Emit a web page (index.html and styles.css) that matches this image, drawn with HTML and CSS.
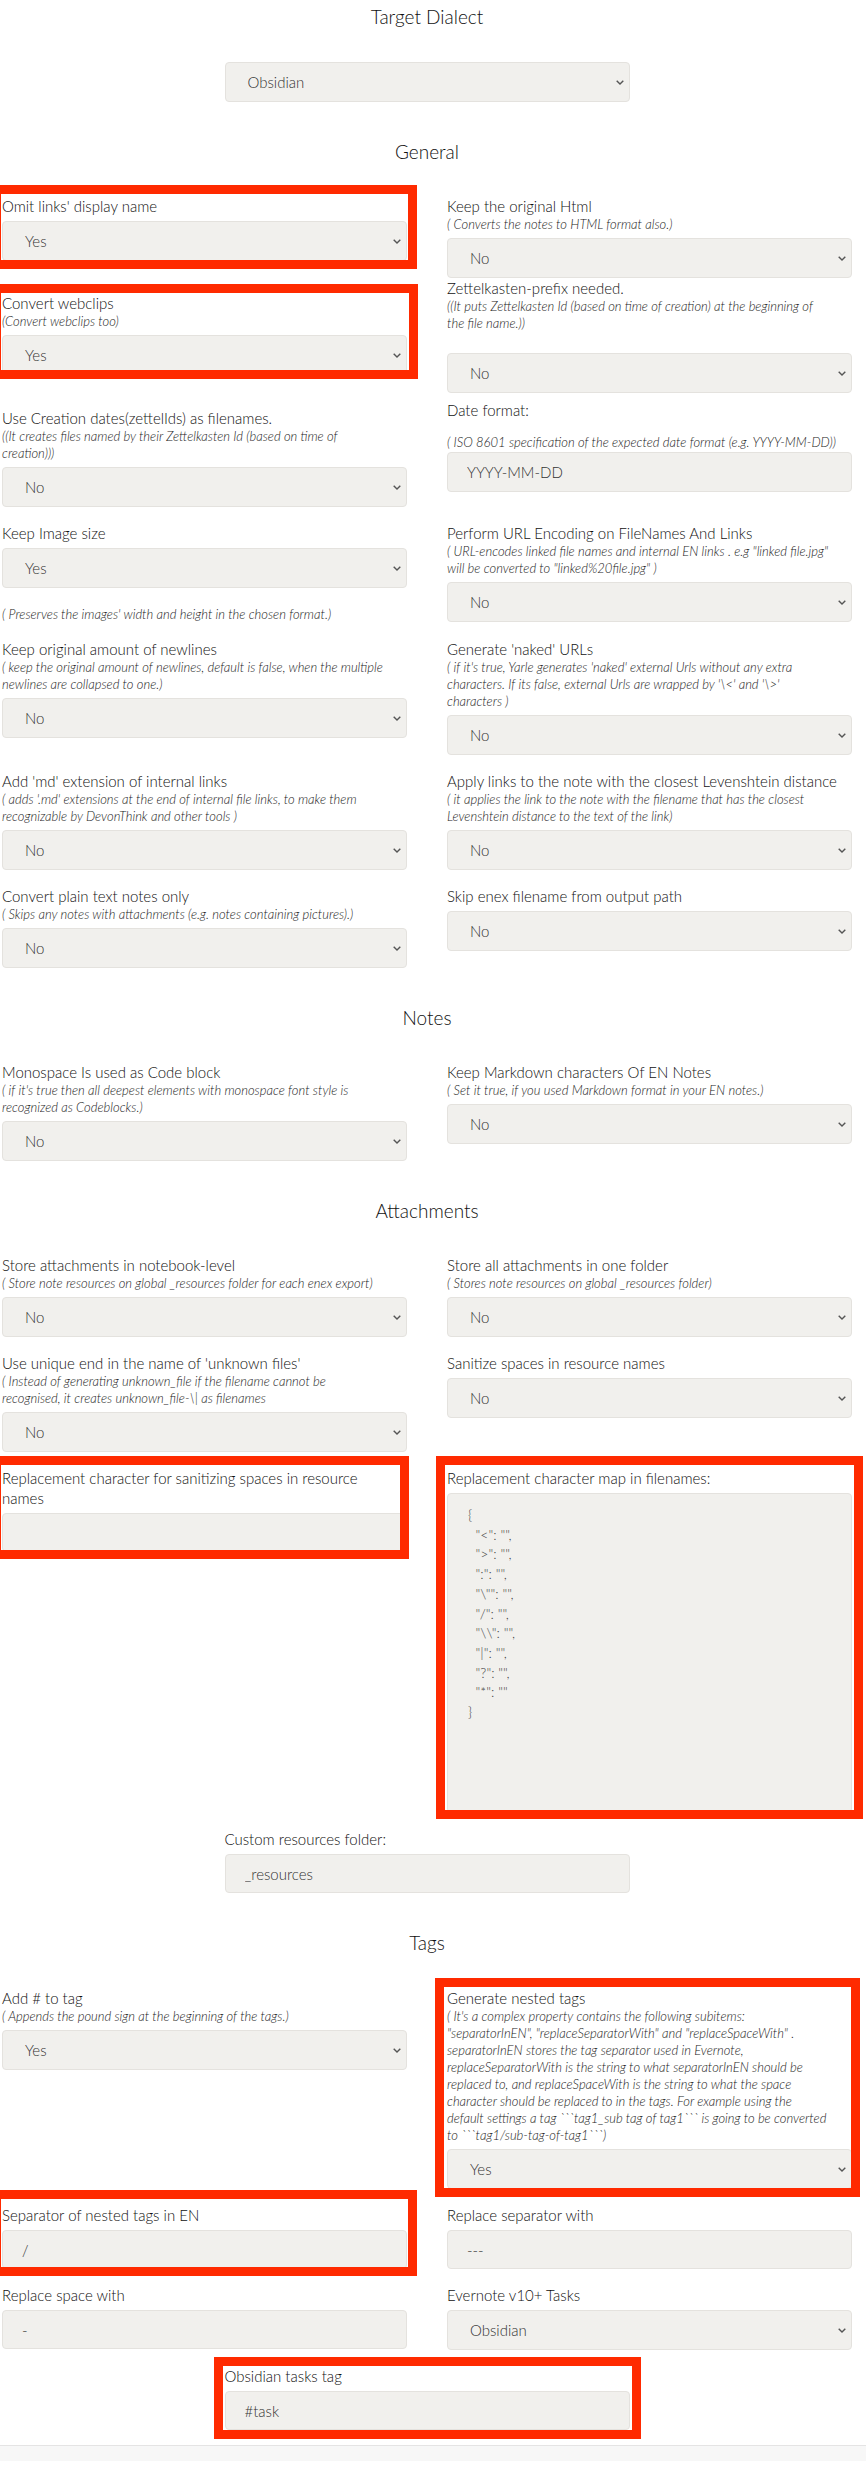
FILE: index.html
```html
<!DOCTYPE html>
<html lang="en">
<head>
<meta charset="utf-8">
<title>Yarle settings</title>
<link rel="stylesheet" href="styles.css">
</head>
<body>
<div class="page">
  <h2 class="heading first">Target Dialect</h2>
  <div class="center-field dialect">
    <div class="select"><span>Obsidian</span><svg class="chev" viewBox="0 0 8 5" width="8" height="5"><path d="M0.7 0.7 L4 4 L7.3 0.7" fill="none" stroke="#555" stroke-width="1.4"/></svg></div>
  </div>

  <h2 class="heading">General</h2>
  <div class="grid">
    <div class="group mark mark-a">
      <label class="lbl">Omit links' display name</label>
      <div class="select"><span>Yes</span><svg class="chev" viewBox="0 0 8 5" width="8" height="5"><path d="M0.7 0.7 L4 4 L7.3 0.7" fill="none" stroke="#555" stroke-width="1.4"/></svg></div>
    </div>
    <div class="group">
      <label class="lbl">Keep the original Html</label>
      <div class="desc">( Converts the notes to HTML format also.)</div>
      <div class="select"><span>No</span><svg class="chev" viewBox="0 0 8 5" width="8" height="5"><path d="M0.7 0.7 L4 4 L7.3 0.7" fill="none" stroke="#555" stroke-width="1.4"/></svg></div>
    </div>

    <div class="group mt15 mark mark-b">
      <label class="lbl">Convert webclips</label>
      <div class="desc">(Convert webclips too)</div>
      <div class="select"><span>Yes</span><svg class="chev" viewBox="0 0 8 5" width="8" height="5"><path d="M0.7 0.7 L4 4 L7.3 0.7" fill="none" stroke="#555" stroke-width="1.4"/></svg></div>
    </div>
    <div class="group mt0">
      <label class="lbl">Zettelkasten-prefix needed.</label>
      <div class="desc extra">((It puts Zettelkasten Id (based on time of creation) at the beginning of<br>the file name.))</div>
      <div class="select"><span>No</span><svg class="chev" viewBox="0 0 8 5" width="8" height="5"><path d="M0.7 0.7 L4 4 L7.3 0.7" fill="none" stroke="#555" stroke-width="1.4"/></svg></div>
    </div>

    <div class="group mt15">
      <label class="lbl">Use Creation dates(zettelIds) as filenames.</label>
      <div class="desc">((It creates files named by their Zettelkasten Id (based on time of<br>creation)))</div>
      <div class="select"><span>No</span><svg class="chev" viewBox="0 0 8 5" width="8" height="5"><path d="M0.7 0.7 L4 4 L7.3 0.7" fill="none" stroke="#555" stroke-width="1.4"/></svg></div>
    </div>
    <div class="group mt7">
      <label class="lbl">Date format:</label>
      <div class="desc gap-top">( ISO 8601 specification of the expected date format (e.g. YYYY-MM-DD))</div>
      <input class="input tight" type="text" value="YYYY-MM-DD">
    </div>

    <div class="group">
      <label class="lbl">Keep Image size</label>
      <div class="select"><span>Yes</span><svg class="chev" viewBox="0 0 8 5" width="8" height="5"><path d="M0.7 0.7 L4 4 L7.3 0.7" fill="none" stroke="#555" stroke-width="1.4"/></svg></div>
      <div class="desc after">( Preserves the images' width and height in the chosen format.)</div>
    </div>
    <div class="group">
      <label class="lbl">Perform URL Encoding on FileNames And Links</label>
      <div class="desc">( URL-encodes linked file names and internal EN links . e.g "linked file.jpg"<br>will be converted to "linked%20file.jpg" )</div>
      <div class="select"><span>No</span><svg class="chev" viewBox="0 0 8 5" width="8" height="5"><path d="M0.7 0.7 L4 4 L7.3 0.7" fill="none" stroke="#555" stroke-width="1.4"/></svg></div>
    </div>

    <div class="group">
      <label class="lbl">Keep original amount of newlines</label>
      <div class="desc">( keep the original amount of newlines, default is false, when the multiple<br>newlines are collapsed to one.)</div>
      <div class="select"><span>No</span><svg class="chev" viewBox="0 0 8 5" width="8" height="5"><path d="M0.7 0.7 L4 4 L7.3 0.7" fill="none" stroke="#555" stroke-width="1.4"/></svg></div>
    </div>
    <div class="group">
      <label class="lbl">Generate 'naked' URLs</label>
      <div class="desc">( if it's true, Yarle generates 'naked' external Urls without any extra<br>characters. If its false, external Urls are wrapped by '\&lt;' and '\&gt;'<br>characters )</div>
      <div class="select"><span>No</span><svg class="chev" viewBox="0 0 8 5" width="8" height="5"><path d="M0.7 0.7 L4 4 L7.3 0.7" fill="none" stroke="#555" stroke-width="1.4"/></svg></div>
    </div>

    <div class="group">
      <label class="lbl">Add 'md' extension of internal links</label>
      <div class="desc">( adds '.md' extensions at the end of internal file links, to make them<br>recognizable by DevonThink and other tools )</div>
      <div class="select"><span>No</span><svg class="chev" viewBox="0 0 8 5" width="8" height="5"><path d="M0.7 0.7 L4 4 L7.3 0.7" fill="none" stroke="#555" stroke-width="1.4"/></svg></div>
    </div>
    <div class="group">
      <label class="lbl">Apply links to the note with the closest Levenshtein distance</label>
      <div class="desc">( it applies the link to the note with the filename that has the closest<br>Levenshtein distance to the text of the link)</div>
      <div class="select"><span>No</span><svg class="chev" viewBox="0 0 8 5" width="8" height="5"><path d="M0.7 0.7 L4 4 L7.3 0.7" fill="none" stroke="#555" stroke-width="1.4"/></svg></div>
    </div>

    <div class="group">
      <label class="lbl">Convert plain text notes only</label>
      <div class="desc">( Skips any notes with attachments (e.g. notes containing pictures).)</div>
      <div class="select"><span>No</span><svg class="chev" viewBox="0 0 8 5" width="8" height="5"><path d="M0.7 0.7 L4 4 L7.3 0.7" fill="none" stroke="#555" stroke-width="1.4"/></svg></div>
    </div>
    <div class="group">
      <label class="lbl">Skip enex filename from output path</label>
      <div class="select"><span>No</span><svg class="chev" viewBox="0 0 8 5" width="8" height="5"><path d="M0.7 0.7 L4 4 L7.3 0.7" fill="none" stroke="#555" stroke-width="1.4"/></svg></div>
    </div>
  </div>

  <h2 class="heading">Notes</h2>
  <div class="grid">
    <div class="group">
      <label class="lbl">Monospace Is used as Code block</label>
      <div class="desc">( if it's true then all deepest elements with monospace font style is<br>recognized as Codeblocks.)</div>
      <div class="select"><span>No</span><svg class="chev" viewBox="0 0 8 5" width="8" height="5"><path d="M0.7 0.7 L4 4 L7.3 0.7" fill="none" stroke="#555" stroke-width="1.4"/></svg></div>
    </div>
    <div class="group">
      <label class="lbl">Keep Markdown characters Of EN Notes</label>
      <div class="desc">( Set it true, if you used Markdown format in your EN notes.)</div>
      <div class="select"><span>No</span><svg class="chev" viewBox="0 0 8 5" width="8" height="5"><path d="M0.7 0.7 L4 4 L7.3 0.7" fill="none" stroke="#555" stroke-width="1.4"/></svg></div>
    </div>
  </div>

  <h2 class="heading">Attachments</h2>
  <div class="grid">
    <div class="group">
      <label class="lbl">Store attachments in notebook-level</label>
      <div class="desc">( Store note resources on global _resources folder for each enex export)</div>
      <div class="select"><span>No</span><svg class="chev" viewBox="0 0 8 5" width="8" height="5"><path d="M0.7 0.7 L4 4 L7.3 0.7" fill="none" stroke="#555" stroke-width="1.4"/></svg></div>
    </div>
    <div class="group">
      <label class="lbl">Store all attachments in one folder</label>
      <div class="desc">( Stores note resources on global _resources folder)</div>
      <div class="select"><span>No</span><svg class="chev" viewBox="0 0 8 5" width="8" height="5"><path d="M0.7 0.7 L4 4 L7.3 0.7" fill="none" stroke="#555" stroke-width="1.4"/></svg></div>
    </div>

    <div class="group">
      <label class="lbl">Use unique end in the name of 'unknown files'</label>
      <div class="desc">( Instead of generating unknown_file if the filename cannot be<br>recognised, it creates unknown_file-\| as filenames</div>
      <div class="select"><span>No</span><svg class="chev" viewBox="0 0 8 5" width="8" height="5"><path d="M0.7 0.7 L4 4 L7.3 0.7" fill="none" stroke="#555" stroke-width="1.4"/></svg></div>
    </div>
    <div class="group">
      <label class="lbl">Sanitize spaces in resource names</label>
      <div class="select"><span>No</span><svg class="chev" viewBox="0 0 8 5" width="8" height="5"><path d="M0.7 0.7 L4 4 L7.3 0.7" fill="none" stroke="#555" stroke-width="1.4"/></svg></div>
    </div>

    <div class="group mark mark-c">
      <label class="lbl">Replacement character for sanitizing spaces in resource<br>names</label>
      <input class="input" type="text" value="">
    </div>
    <div class="group mark mark-d">
      <label class="lbl">Replacement character map in filenames:</label>
      <div class="map" role="textbox" aria-multiline="true">{
  "&lt;": "",
  "&gt;": "",
  ":": "",
  "\"": "",
  "/": "",
  "\\": "",
  "|": "",
  "?": "",
  "*": ""
}</div>
    </div>
  </div>

  <div class="center-field group">
    <label class="lbl">Custom resources folder:</label>
    <input class="input" type="text" value="_resources">
  </div>

  <h2 class="heading tags">Tags</h2>
  <div class="grid">
    <div class="group">
      <label class="lbl">Add # to tag</label>
      <div class="desc">( Appends the pound sign at the beginning of the tags.)</div>
      <div class="select"><span>Yes</span><svg class="chev" viewBox="0 0 8 5" width="8" height="5"><path d="M0.7 0.7 L4 4 L7.3 0.7" fill="none" stroke="#555" stroke-width="1.4"/></svg></div>
    </div>
    <div class="group mark mark-e">
      <label class="lbl">Generate nested tags</label>
      <div class="desc">( It's a complex property contains the following subitems:<br>"separatorInEN", "replaceSeparatorWith" and "replaceSpaceWith" .<br>separatorInEN stores the tag separator used in Evernote,<br>replaceSeparatorWith is the string to what separatorInEN should be<br>replaced to, and replaceSpaceWith is the string to what the space<br>character should be replaced to in the tags. For example using the<br>default settings a tag ```tag1_sub tag of tag1``` is going to be converted<br>to ```tag1/sub-tag-of-tag1```)</div>
      <div class="select"><span>Yes</span><svg class="chev" viewBox="0 0 8 5" width="8" height="5"><path d="M0.7 0.7 L4 4 L7.3 0.7" fill="none" stroke="#555" stroke-width="1.4"/></svg></div>
    </div>

    <div class="group mark mark-f">
      <label class="lbl">Separator of nested tags in EN</label>
      <input class="input" type="text" value="/">
    </div>
    <div class="group">
      <label class="lbl">Replace separator with</label>
      <input class="input" type="text" value="---">
    </div>

    <div class="group">
      <label class="lbl">Replace space with</label>
      <input class="input" type="text" value="-">
    </div>
    <div class="group">
      <label class="lbl">Evernote v10+ Tasks</label>
      <div class="select"><span>Obsidian</span><svg class="chev" viewBox="0 0 8 5" width="8" height="5"><path d="M0.7 0.7 L4 4 L7.3 0.7" fill="none" stroke="#555" stroke-width="1.4"/></svg></div>
    </div>
  </div>

  <div class="center-field group mark mark-g">
    <label class="lbl">Obsidian tasks tag</label>
    <input class="input" type="text" value="#task">
  </div>
</div>
<div class="footer"></div>
</body>
</html>
```

FILE: styles.css
```css
* {
  box-sizing: border-box;
}

html, body {
  margin: 0;
  padding: 0;
  background: #ffffff;
}

body {
  font-family: Lato, "Open Sans", sans-serif;
  color: #111111;
  overflow-x: hidden;
  min-height: 2488px;
}

.page {
  padding: 5px 14px 0 2px;
}

.heading {
  font-size: 19px;
  font-weight: 300;
  line-height: 24px;
  text-align: center;
  color: #111111;
  margin: 38px 0 16px;
}

.heading.first {
  margin: 0;
}

.heading.tags {
  margin-bottom: 17px;
}

.center-field {
  width: 405px;
  margin-left: auto;
  margin-right: auto;
}

.center-field.dialect {
  margin-top: 33px;
}

.grid {
  display: grid;
  grid-template-columns: 1fr 1fr;
  column-gap: 40px;
  align-items: start;
}

.group {
  margin-top: 16px;
  position: relative;
}

.group.mt0 { margin-top: 0; }
.group.mt7 { margin-top: 7px; }
.group.mt15 { margin-top: 15px; }

.lbl {
  display: block;
  font-size: 15px;
  font-weight: 300;
  line-height: 20px;
  color: #111111;
}

.desc {
  font-size: 13px;
  font-style: italic;
  font-weight: 300;
  line-height: 17px;
  color: #1a1a1a;
  white-space: nowrap;
}

.desc.extra {
  margin-bottom: 21px;
}

.desc.gap-top {
  margin-top: 14px;
}

.desc.after {
  margin-top: 18px;
}

.select {
  margin-top: 5px;
  height: 40px;
  display: flex;
  align-items: center;
  justify-content: space-between;
  padding: 0 5px 0 22px;
  background: #f1f0ed;
  border: 1px solid #e4e2de;
  border-radius: 4px;
  font-size: 15px;
  font-weight: 300;
  color: #333333;
}

.chev {
  display: block;
  flex: none;
}

.input {
  display: block;
  width: 100%;
  margin-top: 5px;
  height: 39px;
  padding: 0 19px;
  background: #f1f0ed;
  border: 1px solid #e4e2de;
  border-radius: 4px;
  font-family: Lato, "Open Sans", sans-serif;
  font-size: 15px;
  font-weight: 300;
  color: #333333;
  outline: none;
}

.input.tight {
  margin-top: 1px;
  height: 40px;
}

.map {
  display: block;
  width: 100%;
  height: 320px;
  margin-top: 5px;
  padding: 11px 20px;
  background: #f1f0ed;
  border: 1px solid #e4e2de;
  border-radius: 4px;
  font-family: Lato, "Open Sans", sans-serif;
  font-size: 14px;
  font-weight: 300;
  line-height: 19.7px;
  color: #444444;
  white-space: pre;
  overflow: hidden;
}

.mark::after {
  content: "";
  position: absolute;
  border: 9px solid #ff2a00;
  pointer-events: none;
}

.mark-a::after { top: -11px; bottom: -8px; left: -10px; right: -10px; }
.mark-b::after { top: -9px; bottom: -4px; left: -10px; right: -11px; }
.mark-c::after { top: -12px; bottom: -7px; left: -10px; right: -2px; }
.mark-d::after { top: -12px; bottom: -6px; left: -11px; right: -11px; }
.mark-e::after { top: -10px; bottom: -8px; left: -12px; right: -8px; }
.mark-f::after { top: -15px; bottom: -7px; left: -10px; right: -10px; }
.mark-g::after { top: -9px; bottom: -9px; left: -11px; right: -11px; }

.footer {
  margin-top: 15px;
  height: 16px;
  border-top: 1px solid #e4e4e4;
  background: #f7f7f7;
}
```
